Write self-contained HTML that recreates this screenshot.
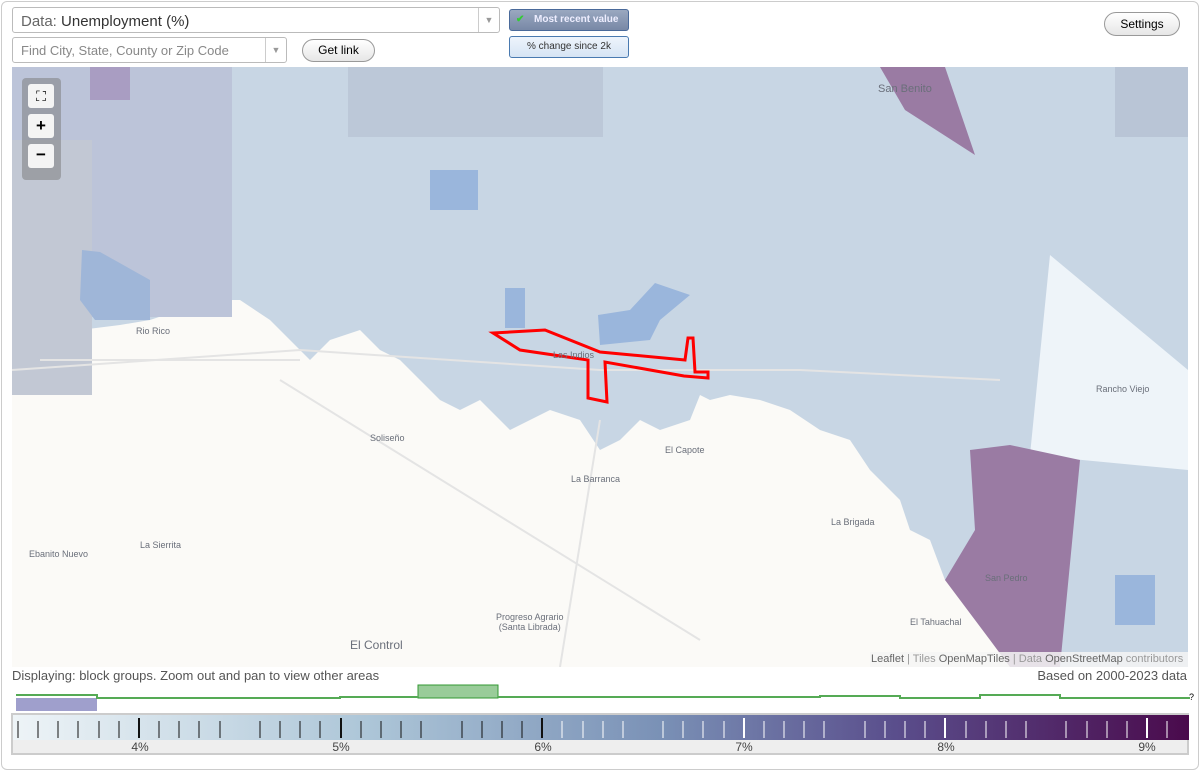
<!DOCTYPE html>
<html><head><meta charset="utf-8"><style>
body{margin:0;width:1200px;height:771px;background:#fff;font-family:"Liberation Sans",sans-serif;position:relative;overflow:hidden}
.frame{position:absolute;left:1px;top:1px;width:1196px;height:767px;border:1px solid #ccc;border-radius:6px}
.sel{position:absolute;background:#fff;border:1px solid #bbb;border-radius:3px;box-sizing:border-box}
.btn{position:absolute;border:1px solid #999;border-radius:12px;background:linear-gradient(#fff,#e6e6e6);font-size:12px;text-align:center;box-sizing:border-box}
.lbl{position:absolute;font-size:9px;color:#6a6f7a}
</style></head><body>
<div class="frame"></div>
<div class="sel" style="left:12px;top:7px;width:488px;height:26px;font-size:15px;padding:5px 8px;color:#333"><span style="color:#666">Data:</span> Unemployment (%)<span style="position:absolute;right:0;top:0;width:20px;height:24px;border-left:1px solid #ccc;color:#999;font-size:9px;text-align:center;line-height:24px">▼</span></div>
<div class="sel" style="left:12px;top:37px;width:275px;height:26px;font-size:13px;padding:5px 8px;color:#888">Find City, State, County or Zip Code<span style="position:absolute;right:0;top:0;width:20px;height:24px;border-left:1px solid #ccc;color:#999;font-size:9px;text-align:center;line-height:24px">▼</span></div>
<div class="btn" style="left:302px;top:39px;width:73px;height:23px;line-height:21px">Get link</div>
<div style="position:absolute;left:509px;top:9px;width:120px;height:22px;border:1px solid #4a6a9a;border-radius:3px;background:linear-gradient(#9aa8c0,#7888a6);color:#eef;font-size:10px;font-weight:bold;line-height:20px;box-sizing:border-box;padding-left:24px"><span style="position:absolute;left:6px;top:0;color:#3c3">✔</span>Most recent value</div>
<div style="position:absolute;left:509px;top:36px;width:120px;height:22px;border:1px solid #4a7ab0;border-radius:3px;background:linear-gradient(#eef4fc,#d6e4f4);color:#333;font-size:10px;line-height:20px;text-align:center;box-sizing:border-box">% change since 2k</div>
<div class="btn" style="left:1104px;top:12px;width:76px;height:24px;line-height:22px">Settings</div>

<svg style="position:absolute;left:12px;top:67px" width="1176" height="600" viewBox="12 67 1176 600">
<rect x="12" y="67" width="1176" height="600" fill="#fbfaf7"/>
<path d="M12 67H1188V667H1060L1040 640L990 620L945 580L930 540L910 530L900 500L870 470L850 440L820 430L790 410L760 400L730 395L710 400L700 395L690 420L660 430L640 420L620 440L600 450L580 420L550 410L530 420L510 430L490 410L480 400L460 410L440 400L420 380L400 360L380 350L360 330L330 340L310 360L290 340L270 320L240 300L220 300L180 310L150 320L120 325L80 330L40 330L12 320Z" fill="#c8d6e4"/>
<rect x="12" y="67" width="220" height="250" fill="#bcc4d9"/>
<rect x="12" y="140" width="80" height="255" fill="#c2c8d4"/>
<path d="M90 67H130V100H90Z" fill="#a99dc2"/>
<path d="M82 250L100 252L150 280L150 320L95 320L80 300Z" fill="#9fb6d8"/>
<rect x="348" y="67" width="255" height="70" fill="#bcc8d8"/>
<path d="M880 67H945L975 155L905 110Z" fill="#9a7ba3"/>
<path d="M1030 455L1050 255L1188 370V470Z" fill="#eef4f9"/>
<path d="M970 450L1010 445L1080 460L1060 667H1010L990 640L945 580L975 530Z" fill="#9a7ba3"/>
<rect x="430" y="170" width="48" height="40" fill="#9ab6dc"/>
<path d="M598 315L630 310L655 283L690 295L660 320L650 340L600 345Z" fill="#9ab6dc"/>
<rect x="505" y="288" width="20" height="40" fill="#9ab6dc"/>
<rect x="1115" y="575" width="40" height="50" fill="#9ab6dc"/>
<rect x="1115" y="67" width="73" height="70" fill="#b9c5d6"/>
<g fill="none" stroke="#e4e4e4" stroke-width="2"><path d="M12 370L300 350L600 370L800 370L1000 380M280 380L700 640M600 420L560 667M40 360L300 360"/></g>
<path d="M493 333L545 330L600 352L685 360L688 338L693 338L695 372L708 372L708 378L684 376L605 362L607 402L588 398L588 360L520 350Z" fill="none" stroke="#f00" stroke-width="3"/>
<rect x="870" y="652" width="318" height="15" fill="#f4f4f4" opacity=".85"/>
</svg>
<div class="lbl" style="left:878px;top:83px;font-size:11px">San Benito</div>
<div class="lbl" style="left:136px;top:326px">Rio Rico</div>
<div class="lbl" style="left:553px;top:350px">Las Indios</div>
<div class="lbl" style="left:1096px;top:384px">Rancho Viejo</div>
<div class="lbl" style="left:370px;top:433px">Soliseño</div>
<div class="lbl" style="left:665px;top:445px">El Capote</div>
<div class="lbl" style="left:571px;top:474px">La Barranca</div>
<div class="lbl" style="left:831px;top:517px">La Brigada</div>
<div class="lbl" style="left:29px;top:549px">Ebanito Nuevo</div>
<div class="lbl" style="left:140px;top:540px">La Sierrita</div>
<div class="lbl" style="left:985px;top:573px">San Pedro</div>
<div class="lbl" style="left:496px;top:612px;text-align:center">Progreso Agrario<br>(Santa Librada)</div>
<div class="lbl" style="left:910px;top:617px">El Tahuachal</div>
<div class="lbl" style="left:350px;top:638px;font-size:12px">El Control</div>
<div style="position:absolute;left:22px;top:78px;width:39px;height:102px;background:rgba(120,120,120,.5);border-radius:4px"></div>
<div style="position:absolute;left:28px;top:84px;width:26px;height:24px;background:#f4f4f4;border-radius:3px;text-align:center;font-size:14px;line-height:24px">⛶</div>
<div style="position:absolute;left:28px;top:114px;width:26px;height:24px;background:#f4f4f4;border-radius:3px;text-align:center;font-weight:bold;font-size:17px;line-height:24px">+</div>
<div style="position:absolute;left:28px;top:144px;width:26px;height:24px;background:#f4f4f4;border-radius:3px;text-align:center;font-weight:bold;font-size:17px;line-height:22px">−</div>
<div style="position:absolute;left:871px;top:653px;font-size:11px;color:#999"><b style="color:#666;font-weight:normal">Leaflet</b> | Tiles <span style="color:#666">OpenMapTiles</span> | Data <span style="color:#666">OpenStreetMap</span> contributors</div>
<div style="position:absolute;left:12px;top:668px;font-size:13px;color:#555">Displaying: block groups. Zoom out and pan to view other areas</div>
<div style="position:absolute;right:13px;top:668px;font-size:13px;color:#555">Based on 2000-2023 data</div>
<svg style="position:absolute;left:0;top:680px" width="1200" height="34">
<rect x="16" y="18" width="81" height="13" fill="#9f9fcc"/>
<rect x="418" y="5" width="80" height="13" fill="#99cc99" stroke="#393" stroke-width="1"/>
<path d="M16 15H97V18H340V17H418M498 17H820V16H900V18H980V15H1060V18H1190" fill="none" stroke="#5a5" stroke-width="2"/>
<text x="1189" y="20" font-size="9" font-family="Liberation Sans">?</text>
</svg>
<div style="position:absolute;left:11px;top:713px;width:1178px;height:42px;border:2px solid #ccc;box-sizing:border-box;background:#eee"></div>
<svg style="position:absolute;left:13px;top:715px" width="1176" height="38">
<defs><linearGradient id="g"><stop offset="0" stop-color="#eef4f7"/><stop offset=".3" stop-color="#adc6d8"/><stop offset=".55" stop-color="#7a91b6"/><stop offset=".75" stop-color="#5a4e8c"/><stop offset="1" stop-color="#4a0a4c"/></linearGradient></defs>
<rect width="1176" height="25" fill="url(#g)"/>
<g stroke="#111" stroke-width="1"><path d="M5 6V23M25 6V23M45 6V23M65 6V23M86 6V23M106 6V23M146 6V23M166 6V23M186 6V23M207 6V23M247 6V23M267 6V23M287 6V23M307 6V23M348 6V23M368 6V23M388 6V23M408 6V23M449 6V23M469 6V23M489 6V23M509 6V23"/></g>
<g stroke="#111" stroke-width="2"><path d="M126 3V23M328 3V23M529 3V23"/></g>
<g stroke="#fff" stroke-width="1"><path d="M549 6V23M570 6V23M590 6V23M610 6V23M650 6V23M670 6V23M690 6V23M711 6V23M751 6V23M771 6V23M791 6V23M811 6V23M852 6V23M872 6V23M892 6V23M912 6V23M953 6V23M973 6V23M993 6V23M1013 6V23M1053 6V23M1074 6V23M1094 6V23M1114 6V23M1154 6V23"/></g>
<g stroke="#fff" stroke-width="2"><path d="M731 3V23M932 3V23M1134 3V23"/></g>
<g font-size="12" fill="#444" font-family="Liberation Sans" text-anchor="middle"><text x="127" y="36">4%</text><text x="328" y="36">5%</text><text x="530" y="36">6%</text><text x="731" y="36">7%</text><text x="933" y="36">8%</text><text x="1134" y="36">9%</text></g>
</svg>
</body></html>
